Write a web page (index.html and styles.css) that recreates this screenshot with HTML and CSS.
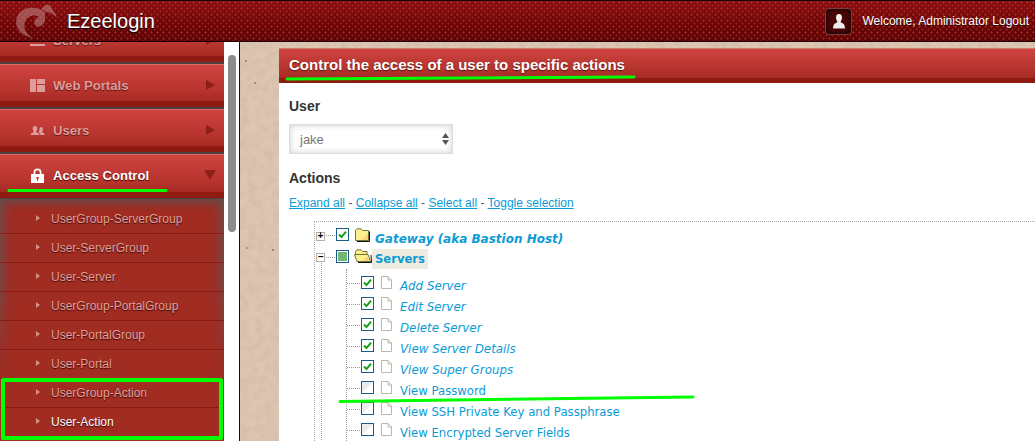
FILE: index.html
```html
<!DOCTYPE html>
<html lang="en">
<head>
<meta charset="utf-8">
<title>Ezeelogin</title>
<link rel="stylesheet" href="styles.css">
</head>
<body>
<svg class="defs" width="0" height="0" aria-hidden="true">
  <defs>
    <symbol id="check" viewBox="0 0 13 13">
      <rect x=".5" y=".5" width="12" height="12" fill="#fff" stroke="#1c5a8a"/>
      <path d="M3 6.500l2.500 2.600L10 3.600" fill="none" stroke="#12a012" stroke-width="2"/>
    </symbol>
    <symbol id="uncheck" viewBox="0 0 13 13">
      <rect x=".5" y=".5" width="12" height="12" fill="#fff" stroke="#1c5a8a"/>
      <path d="M1 12L1 1H12Z" fill="#ececec"/>
    </symbol>
    <symbol id="file" viewBox="0 0 11 13">
      <path d="M.5.5H7L10.500 4V12.500H.5Z M7 .5V4H10.500" fill="#fff" stroke="#b9b9a6"/>
    </symbol>
    <symbol id="fclosed" viewBox="0 0 16 14">
      <path d="M1.500 2.500L3 .8H7L8.500 2.500H14.500V12.500H1.500Z" fill="#fbf08e" stroke="#77703a"/>
      <path d="M15.500 3.500V13.500H3" fill="none" stroke="#111"/>
      <path d="M9 11l5-6v7H7z" fill="#f2c878" opacity=".7"/>
    </symbol>
    <symbol id="fopen" viewBox="0 0 18 14">
      <path d="M1.500 5V2.500L3 .8H7L8.500 2.500H13V5" fill="#fbf08e" stroke="#77703a"/>
      <path d="M.5 5.500H14L16.500 12.500H3Z" fill="#fbf08e" stroke="#77703a"/>
      <path d="M17 6l.5 7.500H4" fill="none" stroke="#111"/>
      <path d="M9 12l5-5 2 5z" fill="#f2c878" opacity=".8"/>
    </symbol>
  </defs>
</svg>

<header class="topbar">
  <div class="brand">
    <svg class="logo" viewBox="0 0 42 36" aria-hidden="true">
      <path d="M30 9C22 3 8 3 3 12-2 21 3 33 18 35 11 31 8 25 10 19 12 13 19 11 24 14 20 15 18 19 20 22 24 26 30 22 30 16Z" fill="#c08a8a" opacity=".55"/>
      <path d="M26 7C29 2 33 0 36 4 38 8 41 11 42 15 38 11 35 9 31 9 29 7 27 7 26 7Z" fill="#c08a8a" opacity=".55"/>
    </svg>
    <span class="brand-name">Ezeelogin</span>
  </div>
  <div class="account">
    <span class="avatar">
      <svg width="12" height="15" viewBox="0 0 12 15" aria-hidden="true"><path d="M6 0C3.800 0 3 1.800 3 3.500 3 5.200 3.600 6.500 4.300 7.300 4.300 8.300 3.800 8.800 2.500 9.300 1 9.900.3 11 0 14.500H12C11.700 11 11 9.900 9.500 9.300 8.200 8.800 7.700 8.300 7.700 7.300 8.400 6.500 9 5.200 9 3.500 9 1.800 8.200 0 6 0Z" fill="#eee"/></svg>
    </span>
    <span>Welcome, Administrator Logout</span>
  </div>
</header>

<div class="main">
  <nav class="sidebar">
    <ul class="menu">
      <li class="menu-item">
        <svg class="menu-icon" viewBox="0 0 15 13" aria-hidden="true"><path d="M0 1h4v3H0zM5 1h10v2H5zM0 10h15v2H0z"/></svg>
        <span>Servers</span><i class="arrow"></i>
      </li>
      <li class="menu-item">
        <svg class="menu-icon" viewBox="0 0 15 13" aria-hidden="true"><path d="M0 0h6v13H0zM7 0h8v5H7zM7 6h8v7H7z"/></svg>
        <span>Web Portals</span><i class="arrow"></i>
      </li>
      <li class="menu-item">
        <svg class="menu-icon" viewBox="0 0 15 13" aria-hidden="true"><path d="M5 2c1.500 0 2.300 1 2.300 2.500S6.500 7.300 6 7.500c0 1 3 1.200 3.500 3.500H.5C1 8.700 4 8.500 4 7.500 3.500 7.300 2.700 6 2.700 4.500S3.500 2 5 2ZM11 3c1.200 0 2 1 2 2.200S12.300 7.500 12 7.800c0 .8 2.500 1 3 3.200h-4.500C10 9.500 9 8.500 8.500 8c.8-.6 1-1.500 1-2.800C9.500 4 10 3 11 3Z"/></svg>
        <span>Users</span><i class="arrow"></i>
      </li>
      <li class="menu-item active">
        <svg class="menu-icon lock" viewBox="0 0 15 15" aria-hidden="true"><path fill-rule="evenodd" d="M3.500 6V4.500a4 4 0 0 1 8 0V6H14v9H1V6ZM5.200 6h4.600V4.500a2.300 2.300 0 0 0-4.600 0ZM6.300 9v1.500L7 11v2h1v-2l.7-.5V9Z"/></svg>
        <span>Access Control</span><i class="arrow down"></i>
      </li>
    </ul>
    <ul class="submenu">
      <li>UserGroup-ServerGroup</li>
      <li>User-ServerGroup</li>
      <li>User-Server</li>
      <li>UserGroup-PortalGroup</li>
      <li>User-PortalGroup</li>
      <li>User-Portal</li>
      <li>UserGroup-Action</li>
      <li class="current">User-Action</li>
    </ul>
  </nav>

  <div class="gutter"><div class="thumb"></div></div>

  <main class="content">
    <svg class="texture" aria-hidden="true">
      <filter id="paper" x="0" y="0" width="100%" height="100%">
        <feTurbulence type="fractalNoise" baseFrequency=".12" numOctaves="4" seed="8"/>
        <feColorMatrix values="0 0 0 0 .58  0 0 0 0 .45  0 0 0 0 .35  0 0 0 .9 -.32"/>
      </filter>
      <rect width="100%" height="100%" filter="url(#paper)"/>
    </svg>
    <section class="panel">
      <h1 class="panel-title">Control the access of a user to specific actions</h1>
      <div class="panel-body">
        <h2 class="field-label">User</h2>
        <div class="select">
          <span>jake</span>
          <svg width="7" height="12" viewBox="0 0 7 12" aria-hidden="true"><path d="M3.500 0L7 5H0ZM3.500 12L0 7H7Z" fill="#555"/></svg>
        </div>
        <h2 class="field-label actions-label">Actions</h2>
        <p class="links"><a>Expand all</a> - <a>Collapse all</a> - <a>Select all</a> - <a>Toggle selection</a></p>
        <div class="tree">
          <div class="node root-node">
            <span class="toggle">+</span><span class="dots short"></span>
            <svg class="cb"><use href="#check"/></svg>
            <svg class="folder"><use href="#fclosed"/></svg>
            <span class="label strong">Gateway (aka Bastion Host)</span>
          </div>
          <div class="node root-node">
            <span class="toggle">−</span><span class="dots short"></span>
            <span class="cb partial"></span>
            <svg class="folder open"><use href="#fopen"/></svg>
            <span class="label selected">Servers</span>
          </div>
          <div class="branch">
            <ul class="children">
              <li class="leaf"><span class="dots"></span><svg class="cb"><use href="#check"/></svg><svg class="doc"><use href="#file"/></svg><span class="label it">Add Server</span></li>
              <li class="leaf"><span class="dots"></span><svg class="cb"><use href="#check"/></svg><svg class="doc"><use href="#file"/></svg><span class="label it">Edit Server</span></li>
              <li class="leaf"><span class="dots"></span><svg class="cb"><use href="#check"/></svg><svg class="doc"><use href="#file"/></svg><span class="label it">Delete Server</span></li>
              <li class="leaf"><span class="dots"></span><svg class="cb"><use href="#check"/></svg><svg class="doc"><use href="#file"/></svg><span class="label it">View Server Details</span></li>
              <li class="leaf"><span class="dots"></span><svg class="cb"><use href="#check"/></svg><svg class="doc"><use href="#file"/></svg><span class="label it">View Super Groups</span></li>
              <li class="leaf"><span class="dots"></span><svg class="cb"><use href="#uncheck"/></svg><svg class="doc"><use href="#file"/></svg><span class="label">View Password</span></li>
              <li class="leaf"><span class="dots"></span><svg class="cb"><use href="#uncheck"/></svg><svg class="doc"><use href="#file"/></svg><span class="label">View SSH Private Key and Passphrase</span></li>
              <li class="leaf"><span class="dots"></span><svg class="cb"><use href="#uncheck"/></svg><svg class="doc"><use href="#file"/></svg><span class="label">View Encrypted Server Fields</span></li>
            </ul>
          </div>
        </div>
      </div>
    </section>
  </main>
</div>

<div class="mark-box"></div>
<svg class="marks" viewBox="0 0 1035 441" aria-hidden="true">
  <path d="M9 190.500H166"/>
  <path d="M287 79L634 77"/>
  <path d="M340 401.500L693 397"/>
</svg>
</body>
</html>
```
FILE: styles.css
```css
* { box-sizing: border-box; }
html, body { margin: 0; height: 441px; overflow: hidden; }
body { font-family: "Liberation Sans", Arial, sans-serif; background: #fff; position: relative; display: flex; flex-direction: column; }
ul { list-style: none; margin: 0; padding: 0; }
.defs { position: absolute; }

/* top bar */
.topbar {
  height: 42px; flex: none; display: flex; align-items: center; justify-content: space-between;
  padding: 0 6px 0 15px; color: #fff;
  border-top: 1px solid #1a0202; border-bottom: 1px solid #1a0202;
  background-color: #7a0808;
  background-image:
    radial-gradient(circle at 1.500px 1.500px, rgba(190,50,50,.55) 0 1px, transparent 1.300px),
    radial-gradient(circle at 4.500px 4.500px, rgba(190,50,50,.4) 0 1px, transparent 1.300px),
    linear-gradient(#8c1010, #6c0505 55%, #5a0303);
  background-size: 6px 6px, 6px 6px, auto;
}
.brand { display: flex; align-items: center; gap: 10px; }
.logo { width: 42px; height: 36px; }
.brand-name { font-size: 20px; text-shadow: 0 1px 1px #000; }
.account { display: flex; align-items: center; gap: 10px; font-size: 12px; text-shadow: 0 1px 1px rgba(0,0,0,.6); }
.avatar {
  width: 27px; height: 27px; display: flex; align-items: center; justify-content: center;
  background: #4a0606; border-radius: 4px; border: 1px solid #7c3e3e; box-shadow: inset 0 0 5px #000;
}

/* layout */
.main { flex: 1; min-height: 0; display: flex; }
.sidebar { width: 224px; flex: none; overflow: hidden; background: #a02c22; }
.gutter { width: 16px; flex: none; background: #fff; border-right: 1px solid #111; padding: 13px 3px 0 4px; }
.thumb { width: 8px; height: 177px; background: #8c8c8c; border-radius: 4px; }
.content {
  flex: 1; min-width: 0; position: relative; overflow: hidden; padding: 6px 0 0 39px;
  background: #dcc5b1;
}
.content::after {
  content: ""; position: absolute; inset: 0; pointer-events: none;
  background-image:
    radial-gradient(circle at 15px 41px, #a08a76 0 .8px, transparent 1.600px),
    radial-gradient(circle at 6px 19px, #a8927e 0 .8px, transparent 1.600px),
    radial-gradient(circle at 33px 208px, #a08a76 0 .8px, transparent 1.600px),
    radial-gradient(circle at 7px 206px, #b09a86 0 .8px, transparent 1.600px);
}
.texture { position: absolute; inset: 0; width: 100%; height: 100%; }

/* side menu */
.menu { margin-top: -23px; }
.menu-item {
  height: 45px; display: flex; align-items: center; gap: 8px; padding: 2px 9px 4px 30px;
  font-size: 13.100px; font-weight: 700; color: #dd9d9a; text-shadow: 0 1px 1px #5e1510;
  border-top: 1px solid #dc6a63; border-bottom: 2px solid #4a4040;
  background: linear-gradient(#cf4340 0, #b8342e 60%, #a62b23 85%, #8e1a12 85%, #8e1a12 100%);
}
.menu-icon { width: 15px; height: 13px; fill: #dd9d9a; flex: none; }
.menu-item .arrow { margin-left: auto; width: 0; height: 0; border-left: 9px solid #8e1f17; border-top: 5.500px solid transparent; border-bottom: 5.500px solid transparent; }
.menu-item .arrow.down { margin-right: -1px; border-top: 10px solid #8e1f17; border-left: 6px solid transparent; border-right: 6px solid transparent; border-bottom: 0; margin-bottom: 2px; }
.menu-item.active { color: #fff; text-shadow: 0 1px 1px #400; border-bottom-width: 1px; }
.lock { fill: #fff; height: 15px; }

.submenu { position: relative; height: 243px; padding-top: 6px; background: #a02c22; }
.submenu::before {
  content: ""; position: absolute; inset: 0; pointer-events: none;
  box-shadow: inset 0 7px 10px -3px rgba(90,80,80,.8), inset 12px 0 12px -8px rgba(100,90,90,.75), inset -12px 0 12px -8px rgba(100,90,90,.75);
  -webkit-mask-image: linear-gradient(#000 30%, transparent 75%);
  mask-image: linear-gradient(#000 30%, transparent 75%);
}
.submenu li {
  position: relative; height: 29px; line-height: 28px; padding-left: 51px;
  font-size: 12px; color: #e0a09c; text-shadow: 0 1px 1px #3a0a06;
  border-bottom: 1px solid #8c1a12;
}
.submenu li::before {
  content: ""; position: absolute; left: 36px; top: 10px; width: 0; height: 0;
  border-left: 4px solid #d68f8a; border-top: 3px solid transparent; border-bottom: 3px solid transparent;
}
.submenu li.current { color: #fff; }

/* panel */
.panel { position: relative; z-index: 1; background: #fff; height: 100%; }
.panel-title {
  margin: 0; height: 35px; padding: 7px 0 0 10px;
  font-size: 15px; line-height: 18px; font-weight: 700; color: #fff; text-shadow: 0 1px 1px #5e1510;
  border-top: 1px solid #cf7b6e;
  background: linear-gradient(#cf4440 0, #b93630 50%, #a62c25 85%, #8e1a12 85%);
}
.panel-body { padding: 15px 0 0 10px; }
.field-label { margin: 0; font-size: 14px; line-height: 17px; font-weight: 700; color: #333; }
.select {
  width: 164px; height: 30px; margin-top: 9px; display: flex; align-items: center; justify-content: space-between;
  padding: 0 3px 0 10px; font-size: 13px; color: #777;
  background: #fff; border: 1px solid #ddd; box-shadow: inset 0 0 6px #ccc;
}
.actions-label { margin-top: 16px; }
.links { margin: 9px 0 0; font-size: 12px; line-height: 15px; color: #555; }
.links a { color: #0a9bd6; text-decoration: underline; }

/* tree */
.tree {
  margin: 10px 0 0 25px; padding: 3px 0 0 1px; height: 240px;
  border-top: 1px dotted #aaa; border-left: 1px dotted #aaa;
  font-family: "DejaVu Sans", Verdana, sans-serif; font-size: 11.700px; color: #0a9bd6;
  position: relative;
}
.node { height: 21px; display: flex; align-items: center; position: relative; }
.root-node + .root-node { height: 22px; }
.toggle {
  width: 9px; height: 9px; flex: none; display: flex; align-items: center; justify-content: center; margin-top: 1px;
  background: #fff; border: 1px solid #b3b3a0; font: 700 10px/7px "Liberation Mono", monospace; color: #000;
}
.dots { display: block; border-top: 1px dotted #999; flex: none; }
.dots.short { width: 9px; margin: 0 1px 0 1px; }
.cb { width: 13px; height: 13px; flex: none; display: block; margin-bottom: 2px; }
.partial { border: 1px solid #1c5a8a; background: #fff; padding: 1px; background-clip: content-box; background-color: #72b872; }
.folder { width: 16px; height: 14px; margin: 0 5px 2px 5px; flex: none; }
.folder.open { width: 18px; margin-right: 0; }
.label { white-space: nowrap; }
.strong { font-weight: 700; font-style: italic; font-size: 12px; padding-top: 7px; }
.selected { font-weight: 700; font-size: 11.600px; background: #eeebe0; padding: 3px 3px; margin-top: 3px; }
.it { font-style: italic; font-size: 11.850px; }
.branch { margin: -8px 0 0 5px; border-left: 1px dotted #999; height: 240px; padding: 9px 0 0 24px; }
.children { border-left: 1px dotted #999; height: 220px; padding-top: 5px; }
.leaf { height: 21px; display: flex; align-items: center; }
.leaf .dots { width: 13px; margin: 0 1px 2px 0; }
.leaf .cb { margin-bottom: 5px; }
.leaf .label { padding-top: 2px; }
.doc { width: 11px; height: 13px; margin: 0 8px 5px 7px; flex: none; }

/* annotations drawn over the screenshot */
.mark-box { position: absolute; z-index: 2; left: 1px; top: 378px; width: 222px; height: 62px; border: 4px solid #00ff00; border-radius: 2px; }
.marks { position: absolute; z-index: 2; inset: 0; width: 1035px; height: 441px; pointer-events: none; }
.marks path { fill: none; stroke: #00ff00; stroke-width: 3px; stroke-linecap: round; }
```
